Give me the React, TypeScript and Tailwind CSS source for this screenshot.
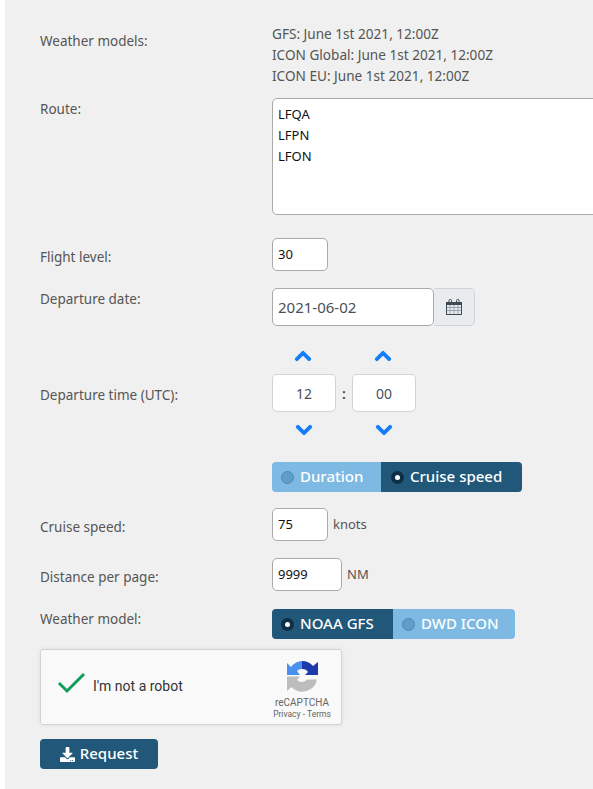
import { FaChevronDown, FaChevronUp, FaDownload } from 'react-icons/fa';

const labelClass = 'w-[232px] shrink-0 text-[13.5px] leading-[20px] text-[#555]';
const inputClass = 'border border-[#aaa] rounded-[5px] bg-white text-[#111] text-[13px] pl-[5px] flex items-center';

function Radio({ on }: { on: boolean }) {
  return on ? (
    <span className="w-[13px] h-[13px] rounded-full bg-[#0f2e47] flex items-center justify-center shrink-0">
      <span className="w-[5px] h-[5px] rounded-full bg-white" />
    </span>
  ) : (
    <span className="w-[13px] h-[13px] rounded-full bg-[#5f9ecb] border border-[#4f86ad] shrink-0" />
  );
}

function Segment({ text, on, className }: { text: string; on: boolean; className: string }) {
  return (
    <div className={`h-[30px] flex items-center text-white text-[15px] font-medium ${on ? 'bg-[#215778]' : 'bg-[#7db9e3]'} ${className}`}>
      <Radio on={on} />
      <span className="ml-[6px] pb-[2px]">{text}</span>
    </div>
  );
}

function TimeBox({ value }: { value: string }) {
  return (
    <div className="w-[64px] flex flex-col items-center">
      <FaChevronUp stroke="currentColor" strokeWidth={30} className="text-[#147efb] text-[18px] mb-[9px] mr-[3px]" />
      <div className="w-[64px] h-[38px] border border-[#ced4da] rounded-[5px] bg-white flex items-center justify-center text-[14px] text-[#495057]">
        {value}
      </div>
      <FaChevronDown stroke="currentColor" strokeWidth={30} className="text-[#147efb] text-[18px] mt-[9px]" />
    </div>
  );
}

function CalendarIcon() {
  return (
    <svg width="16" height="16" viewBox="0 0 16 16" fill="none">
      <path d="M4 6V15M8 6V15M12 6V15M1 8.5h14M1 11.5h14" stroke="#9aa4b0" />
      <rect x="0.5" y="3.5" width="15" height="12" stroke="#3f4a55" />
      <rect x="0" y="3" width="16" height="3" fill="#3f4a55" />
      <rect x="3" y="0.5" width="2.5" height="4" rx="1" stroke="#3f4a55" />
      <rect x="10.5" y="0.5" width="2.5" height="4" rx="1" stroke="#3f4a55" />
    </svg>
  );
}

function RecaptchaLogo() {
  return (
    <svg width="31" height="31" viewBox="0 0 31 31" className="mx-auto">
      <path d="M0 15.5H13L10 19A6.5 6.5 0 0 0 20 18.5H30A15 15 0 0 1 4.5 26L0 30Z" fill="#bdbdbd" />
      <path d="M15 0A15 15 0 0 1 26 5L31 1V14H18L21 11A6.5 6.5 0 0 0 15 8Z" fill="#1c3aa9" />
      <path d="M15 0V8A6.5 6.5 0 0 0 10 10L13 14H0V2L4 6A15 15 0 0 1 15 0Z" fill="#4a90f0" />
    </svg>
  );
}

export default function App() {
  return (
    <div className="w-[593px] h-[789px] overflow-hidden bg-white pl-[5px] font-['Noto_Sans','Liberation_Sans',sans-serif]">
      <div className="h-full bg-[#f0f0f0] pl-[35px] pt-[23px]">
        <div className="flex">
          <div className={`${labelClass} pt-[8px]`}>Weather models:</div>
          <div className="text-[13.6px] leading-[21px] text-[#555]">
            <div>GFS: June 1st 2021, 12:00Z</div>
            <div>ICON Global: June 1st 2021, 12:00Z</div>
            <div>ICON EU: June 1st 2021, 12:00Z</div>
          </div>
        </div>

        <div className="flex mt-[12px]">
          <div className={`${labelClass} pt-[1px]`}>Route:</div>
          <div className="w-[340px] h-[117px] shrink-0 border border-[#aaa] rounded-[5px] bg-white text-[#111] text-[13px] leading-[21px] pl-[5px] pt-[5px]">
            <div>LFQA</div>
            <div>LFPN</div>
            <div>LFON</div>
          </div>
        </div>

        <div className="flex items-end mt-[23px]">
          <div className={`${labelClass} pb-[4px]`}>Flight level:</div>
          <div className={`${inputClass} w-[56px] h-[33px]`}>30</div>
        </div>

        <div className="flex mt-[17px]">
          <div className={`${labelClass} pt-[1px]`}>Departure date:</div>
          <div className={`${inputClass} w-[162px] h-[38px] text-[15px] !text-[#495057]`}>2021-06-02</div>
          <div className="w-[41px] h-[38px] border border-[#ced4da] border-l-0 rounded-r-[5px] bg-[#e9ecef] flex items-center justify-center">
            <CalendarIcon />
          </div>
        </div>

        <div className="flex items-center mt-[21px]">
          <div className={`${labelClass} pt-[4px]`}>Departure time (UTC):</div>
          <TimeBox value="12" />
          <div className="w-[16px] text-center text-[14px] font-semibold text-[#495057]">:</div>
          <TimeBox value="00" />
        </div>

        <div className="flex ml-[232px] mt-[23px]">
          <Segment text="Duration" on={false} className="w-[109px] pl-[9px] rounded-l-[4px]" />
          <Segment text="Cruise speed" on={true} className="w-[141px] pl-[10px] rounded-r-[4px]" />
        </div>

        <div className="flex items-end mt-[16px]">
          <div className={`${labelClass} pb-[4px]`}>Cruise speed:</div>
          <div className={`${inputClass} w-[56px] h-[33px]`}>75</div>
          <div className="ml-[5px] pb-[7px] text-[13px] leading-[20px] text-[#555]">knots</div>
        </div>

        <div className="flex items-end mt-[17px]">
          <div className={`${labelClass} pb-[4px]`}>Distance per page:</div>
          <div className={`${inputClass} w-[70px] h-[33px]`}>9999</div>
          <div className="ml-[5px] pb-[7px] text-[13px] leading-[20px] text-[#555]">NM</div>
        </div>

        <div className="flex mt-[18px]">
          <div className={labelClass}>Weather model:</div>
          <Segment text="NOAA GFS" on={true} className="w-[121px] pl-[9px] rounded-l-[4px]" />
          <Segment text="DWD ICON" on={false} className="w-[122px] pl-[9px] rounded-r-[4px]" />
        </div>

        <div className="w-[302px] h-[76px] mt-[10px] border border-[#d3d3d3] rounded-[3px] bg-[#f9f9f9] shadow-[0_0_4px_rgba(0,0,0,0.08)] flex items-center">
          <svg width="30" height="22" viewBox="0 0 30 22" className="ml-[16px] mb-[8px]">
            <path d="M2 11l8 8L27 2" fill="none" stroke="#109d58" strokeWidth="3" />
          </svg>
          <span className="ml-[6px] pb-[2px] text-[14px] text-[#333] font-['Roboto',sans-serif]">I'm not a robot</span>
          <div className="ml-auto w-[70px] mr-[4px] mt-[6px] text-center font-['Roboto',sans-serif] text-[#666]">
            <RecaptchaLogo />
            <div className="text-[10px] leading-[11px] mt-[5px]">reCAPTCHA</div>
            <div className="text-[8.5px] leading-[10px] mt-[1px]">Privacy - Terms</div>
          </div>
        </div>

        <button className="w-[118px] h-[30px] mt-[14px] rounded-[4px] bg-[#215778] text-white text-[15px] font-medium flex items-center justify-center gap-[5px]">
          <FaDownload className="text-[15px]" />
          <span className="pb-[2px]">Request</span>
        </button>
      </div>
    </div>
  );
}
